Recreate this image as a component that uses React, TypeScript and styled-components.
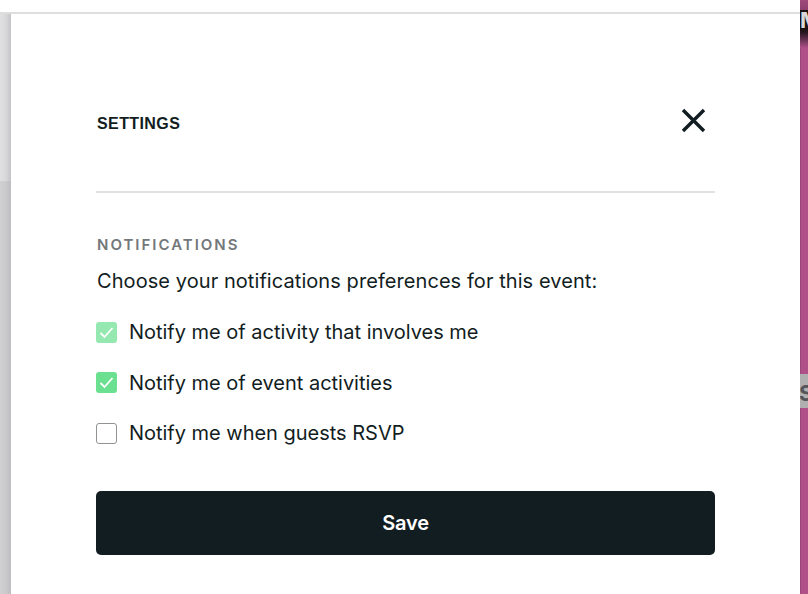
import React from "react";
import styled, { createGlobalStyle } from "styled-components";

const Global = createGlobalStyle`
  html, body { margin: 0; padding: 0; background: #fff; overflow: hidden; }
  #root { width: 808px; height: 594px; }
`;

const Page = styled.div`
  display: flex;
  width: 808px;
  height: 594px;
  overflow: hidden;
  font-family: Inter, "Liberation Sans", sans-serif;
  color: #121d22;
`;

const Main = styled.div`
  flex: 1;
  min-width: 0;
  display: flex;
  flex-direction: column;
`;

const TopGap = styled.div`
  height: 12px;
  flex: none;
  background: #fff;
  border-bottom: 2px solid #dedede;
`;

const Body = styled.div`
  flex: 1;
  min-height: 0;
  display: flex;
`;

const LeftStrip = styled.div`
  width: 11px;
  flex: none;
  display: flex;
  flex-direction: column;
`;

const StripUpper = styled.div`
  height: 167px;
  flex: none;
  background: linear-gradient(90deg, #e0e0e2 0%, #d8d8da 55%, #c4c4c7 100%);
`;

const StripLower = styled.div`
  flex: 1;
  background: linear-gradient(90deg, #d0d0d3 0%, #cacacd 55%, #bdbdc0 100%);
`;

const Modal = styled.section`
  flex: 1;
  background: #fff;
  padding: 0 85px;
  display: flex;
  flex-direction: column;
`;

const Header = styled.header`
  height: 179px;
  flex: none;
  box-sizing: border-box;
  border-bottom: 2px solid #e0e1e2;
  display: flex;
  align-items: flex-start;
  justify-content: space-between;
  padding-top: 94px;
`;

const Title = styled.h2`
  margin: 1px 0 0 1px;
  font-family: "Liberation Sans", sans-serif;
  font-size: 16px;
  line-height: 30px;
  height: 30px;
  font-weight: 700;
  letter-spacing: 0.4px;
  color: #121d22;
`;

const Close = styled.button`
  width: 26px;
  height: 26px;
  margin-right: 9px;
  padding: 0;
  border: 0;
  background: none;
  color: #121d22;
  display: flex;
  align-items: center;
  justify-content: center;
`;

const SectionLabel = styled.div`
  margin: 42px 0 0 1px;
  font-size: 15px;
  line-height: 20px;
  font-weight: 600;
  letter-spacing: 2px;
  color: #73787b;
`;

const Lead = styled.p`
  margin: 12px 0 0 1px;
  font-size: 20px;
  line-height: 28px;
  font-weight: 400;
  letter-spacing: 0.07px;
`;

const Options = styled.div`
  margin-top: 23px;
  display: flex;
  flex-direction: column;
  gap: 22.5px;
`;

const Option = styled.label`
  display: flex;
  align-items: center;
  gap: 12px;
  height: 28px;
  font-size: 20px;
  letter-spacing: -0.02px;
`;

const Box = styled.span<{ $tone: "off" | "soft" | "on" }>`
  width: 21px;
  height: 21px;
  flex: none;
  box-sizing: border-box;
  border-radius: 3px;
  display: flex;
  align-items: center;
  justify-content: center;
  background: ${(p) => (p.$tone === "soft" ? "#95e8b0" : p.$tone === "on" ? "#6ce091" : "#fff")};
  border: ${(p) => (p.$tone === "off" ? "1px solid #8f9396" : "0")};
`;

const SaveButton = styled.button`
  margin-top: 44px;
  height: 64px;
  flex: none;
  border: 0;
  border-radius: 5px;
  background: #121d22;
  color: #fff;
  font-family: inherit;
  font-size: 20px;
  font-weight: 600;
  letter-spacing: -0.2px;
`;

const RightStrip = styled.div`
  width: 8px;
  flex: none;
  display: flex;
  flex-direction: column;
  overflow: hidden;
  background: #b05088;
  font-weight: 700;
`;

const DarkPink = styled.div`
  height: 10px;
  flex: none;
  background: linear-gradient(180deg, #a04a7c, #8c3f6c);
`;

const PhotoLabel = styled.div`
  height: 18px;
  flex: none;
  background: #1b1214;
  color: #d9d9d9;
  font-size: 22px;
  line-height: 20px;
  text-indent: 0;
  white-space: nowrap;
`;

const PhotoShade = styled.div`
  height: 20px;
  flex: none;
  background: linear-gradient(180deg, #17100f 0%, #2a1a24 25%, #b05088 100%);
`;

const Pink = styled.div<{ $h?: number }>`
  flex: ${(p) => (p.$h ? "none" : "1")};
  height: ${(p) => (p.$h ? `${p.$h}px` : "auto")};
  background: #b05088;
  box-shadow: inset 1px 0 #9c4779;
`;

const GreyLabel = styled.div`
  height: 34px;
  flex: none;
  overflow: hidden;
  background: #b0b0b0;
  color: #55555a;
  font-size: 22px;
  line-height: 38px;
  text-indent: -1px;
  white-space: nowrap;
`;

const Check = () => (
  <svg width="15" height="13" viewBox="0 0 15 13" fill="none" aria-hidden="true">
    <path d="M1.5 7 L5.5 11 L13.5 2" stroke="#fff" strokeWidth="1.8" />
  </svg>
);

const options: { label: string; tone: "off" | "soft" | "on" }[] = [
  { label: "Notify me of activity that involves me", tone: "soft" },
  { label: "Notify me of event activities", tone: "on" },
  { label: "Notify me when guests RSVP", tone: "off" },
];

export default function App() {
  return (
    <Page>
      <Global />
      <Main>
        <TopGap />
        <Body>
          <LeftStrip>
            <StripUpper />
            <StripLower />
          </LeftStrip>
          <Modal>
            <Header>
              <Title>SETTINGS</Title>
              <Close aria-label="Close">
                <svg width="26" height="26" viewBox="0 0 26 26" fill="none">
                  <path d="M3 2 L24 23 M24 2 L3 23" stroke="currentColor" strokeWidth="3.4" />
                </svg>
              </Close>
            </Header>
            <SectionLabel>NOTIFICATIONS</SectionLabel>
            <Lead>Choose your notifications preferences for this event:</Lead>
            <Options>
              {options.map((o) => (
                <Option key={o.label}>
                  <Box $tone={o.tone}>{o.tone !== "off" && <Check />}</Box>
                  {o.label}
                </Option>
              ))}
            </Options>
            <SaveButton>Save</SaveButton>
          </Modal>
        </Body>
      </Main>
      <RightStrip>
        <DarkPink />
        <PhotoLabel>M</PhotoLabel>
        <PhotoShade />
        <Pink $h={326} />
        <GreyLabel>S</GreyLabel>
        <Pink />
      </RightStrip>
    </Page>
  );
}
